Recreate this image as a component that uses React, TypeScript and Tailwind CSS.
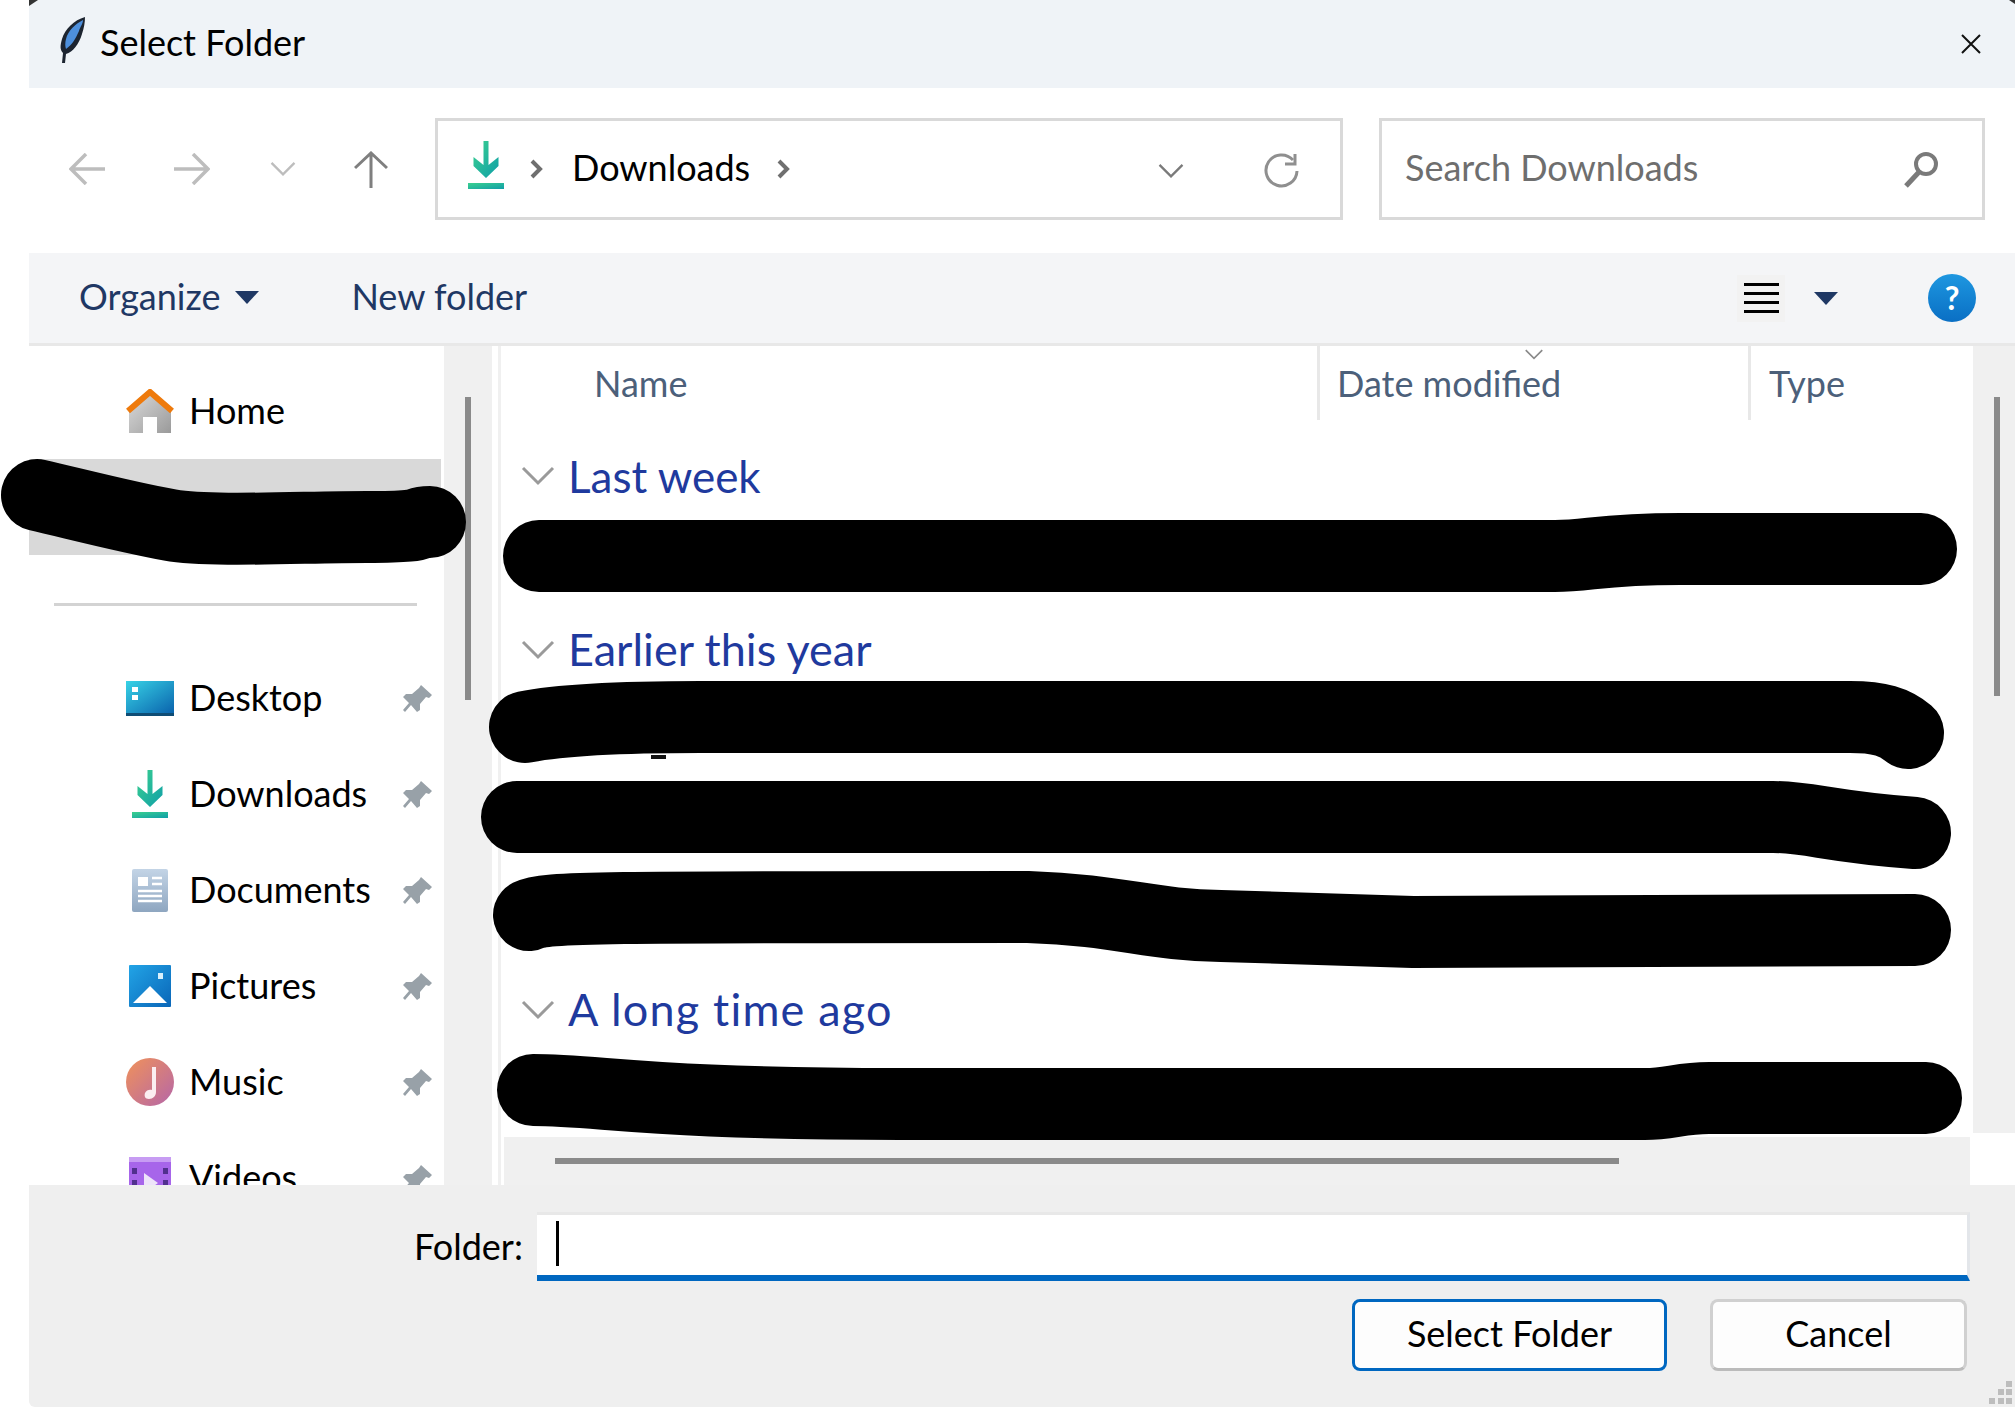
import React from "react";

const font = { fontFamily: "Lato, 'Noto Sans', sans-serif" };

function DownloadIcon({ className }: { className: string }) {
  return (
    <svg viewBox="0 0 36 48" className={className}>
      <defs>
        <linearGradient id="dl" x1="0" y1="0" x2="1" y2="1">
          <stop offset="0" stopColor="#3bd08f" />
          <stop offset="1" stopColor="#0f9fa8" />
        </linearGradient>
      </defs>
      <path d="M15.5 0h5v24l10-8v9L18 37 5.5 25v-9l10 8z" fill="url(#dl)" />
      <rect x="0" y="42" width="36" height="6" fill="url(#dl)" />
    </svg>
  );
}

function Pin() {
  return (
    <svg viewBox="0 0 32 32" className="h-[32px] w-[32px]">
      <path d="M20 1l11 10-3 3-3-1-6 7 0 6-3 2-6-7-6 7-2-2 6-7-6-6 3-3h6l7-6z" fill="#98a1a8" />
    </svg>
  );
}

function HomeIcon() {
  return (
    <svg viewBox="0 0 48 44" className="h-[44px] w-[48px]">
      <defs>
        <linearGradient id="hm" x1="0" y1="0" x2="1" y2="1">
          <stop offset="0" stopColor="#dcdcdc" />
          <stop offset="1" stopColor="#9a9a9a" />
        </linearGradient>
      </defs>
      <path d="M3 22L24 3l21 19v22H31V28H17v16H3z" fill="url(#hm)" />
      <path d="M2 22L24 3l22 19" fill="none" stroke="#ee7a0c" strokeWidth="6" />
    </svg>
  );
}

function DesktopIcon() {
  return (
    <svg viewBox="0 0 48 35" className="h-[35px] w-[48px]">
      <defs>
        <linearGradient id="dk" x1="0" y1="0" x2="1" y2="1">
          <stop offset="0" stopColor="#38d3e6" />
          <stop offset="1" stopColor="#0a63ad" />
        </linearGradient>
      </defs>
      <rect width="48" height="32" fill="url(#dk)" />
      <rect y="32" width="48" height="3" fill="#0f4d75" />
      <rect x="6" y="6" width="6" height="5" fill="#fff" />
      <rect x="6" y="14" width="6" height="5" fill="#fff" />
    </svg>
  );
}

function DocumentsIcon() {
  return (
    <svg viewBox="0 0 36 43" className="h-[43px] w-[36px]">
      <defs>
        <linearGradient id="doc" x1="0" y1="0" x2="0" y2="1">
          <stop offset="0" stopColor="#c3d4e6" />
          <stop offset="1" stopColor="#8ea6c0" />
        </linearGradient>
      </defs>
      <rect width="36" height="43" rx="2" fill="url(#doc)" />
      <rect x="6" y="8" width="10" height="9" fill="#fff" />
      <path d="M20 9h10M20 15h10M6 22h24M6 27h24M6 32h24" stroke="#fff" strokeWidth="2.5" />
    </svg>
  );
}

function PicturesIcon() {
  return (
    <svg viewBox="0 0 42 42" className="h-[42px] w-[42px]">
      <defs>
        <linearGradient id="pic" x1="0" y1="0" x2="1" y2="1">
          <stop offset="0" stopColor="#22a4e6" />
          <stop offset="1" stopColor="#0a66b8" />
        </linearGradient>
      </defs>
      <rect width="42" height="42" rx="1" fill="url(#pic)" />
      <path d="M4 38L21 21l17 17z" fill="#fff" />
      <rect x="29" y="8" width="5" height="6" fill="#d9f0fb" />
    </svg>
  );
}

function MusicIcon() {
  return (
    <svg viewBox="0 0 48 48" className="h-[48px] w-[48px]">
      <defs>
        <linearGradient id="mus" x1="0" y1="0" x2="1" y2="1">
          <stop offset="0" stopColor="#f0925a" />
          <stop offset="1" stopColor="#b566a8" />
        </linearGradient>
      </defs>
      <circle cx="24" cy="24" r="24" fill="url(#mus)" />
      <path d="M26 9h4v25c0 4-3 7-7 7s-5-3-4-6 5-4 7-3z" fill="#fbeef0" />
    </svg>
  );
}

function VideosIcon() {
  return (
    <svg viewBox="0 0 42 42" className="h-[42px] w-[42px]">
      <rect width="42" height="42" fill="#a765ea" />
      <rect width="42" height="5" fill="#c79cf3" />
      <path d="M3 11h5v6H3zM34 11h5v6h-5zM3 23h5v6H3zM34 23h5v6h-5z" fill="#51308e" />
      <path d="M15 16l14 10-14 10z" fill="#eee4fa" />
    </svg>
  );
}

function Caret() {
  return (
    <svg viewBox="0 0 24 13" className="h-[13px] w-[24px]">
      <path d="M0 0h24L12 13z" fill="#1f3864" />
    </svg>
  );
}

function Chevron({ color, className }: { color: string; className: string }) {
  return (
    <svg viewBox="0 0 34 20" className={className}>
      <path d="M2 2l15 15L32 2" fill="none" stroke={color} strokeWidth="3" />
    </svg>
  );
}

function Crumb() {
  return (
    <svg viewBox="0 0 13 20" className="h-[20px] w-[13px]">
      <path d="M2 2l8 8-8 8" fill="none" stroke="#6f6f6f" strokeWidth="4" />
    </svg>
  );
}

function NavRow({ icon, label, pin = true }: { icon: React.ReactNode; label: string; pin?: boolean }) {
  return (
    <div className="flex h-[96px] shrink-0 items-center">
      <div className="ml-[97px] flex w-[48px] justify-center">{icon}</div>
      <span className="ml-[15px] flex-1 pb-[2px] text-[36px] text-black">{label}</span>
      {pin && <div className="mr-[11px] mt-[3px]"><Pin /></div>}
    </div>
  );
}

function GroupHeader({ label, className }: { label: string; className: string }) {
  return (
    <div className="flex h-[78px] shrink-0 items-center pl-[20px]">
      <Chevron color="#9a9a9a" className="h-[20px] w-[34px]" />
      <span className={"ml-[13px] text-[#1f3a9e] " + className}>{label}</span>
    </div>
  );
}

export default function App() {
  return (
    <div className="relative h-[1407px] w-[2015px] overflow-hidden bg-white pl-[29px]" style={font}>
      <div className="flex h-full flex-col">
        {/* title bar */}
        <div className="flex h-[88px] shrink-0 items-center bg-[#eff3f7] pl-[31px] pr-[34px]">
          <svg viewBox="0 0 26 46" className="mb-[8px] h-[46px] w-[26px]">
            <path d="M25 0C14 3 5 12 2 22c-2 7-2 11 1 14l-1 10h3l1-9c7-2 13-10 16-20 2-6 3-12 3-17z" fill="#1c2430" />
            <path d="M23 3C15 7 8 14 6 22c-1 4-1 7 0 10 6-4 10-11 13-18 1-4 4-7 4-11z" fill="#4d8fdc" />
          </svg>
          <span className="ml-[14px] flex-1 pb-[5px] text-[36px] text-black">Select Folder</span>
          <svg viewBox="0 0 20 20" className="h-[20px] w-[20px]">
            <path d="M1 1l18 18M19 1L1 19" stroke="#111" strokeWidth="2" />
          </svg>
        </div>

        {/* navigation row */}
        <div className="flex h-[165px] shrink-0 items-center pb-[3px]">
          <svg viewBox="0 0 36 32" className="ml-[40px] h-[32px] w-[36px]">
            <path d="M36 16H3M17 1L2 16l15 15" fill="none" stroke="#bdbdbd" strokeWidth="3.5" />
          </svg>
          <svg viewBox="0 0 36 32" className="ml-[69px] h-[32px] w-[36px]">
            <path d="M0 16h33M19 1l15 15-15 15" fill="none" stroke="#bdbdbd" strokeWidth="3.5" />
          </svg>
          <Chevron color="#bdbdbd" className="ml-[60px] h-[16px] w-[26px]" />
          <svg viewBox="0 0 34 37" className="ml-[58px] h-[37px] w-[34px]">
            <path d="M17 37V2M1 17L17 2l16 15" fill="none" stroke="#7f7f7f" strokeWidth="3" />
          </svg>
          <div className="ml-[47px] flex h-[102px] w-[908px] shrink-0 items-center border-[3px] border-[#d9d9d9] pl-[30px]">
            <DownloadIcon className="mb-[8px] h-[48px] w-[36px]" />
            <div className="ml-[26px]"><Crumb /></div>
            <span className="ml-[29px] pb-[5px] text-[36px] text-black">Downloads</span>
            <div className="ml-[27px]"><Crumb /></div>
            <div className="flex-1" />
            <Chevron color="#7a7a7a" className="mt-[4px] h-[16px] w-[26px]" />
            <svg viewBox="0 0 36 36" className="ml-[80px] mr-[40px] mt-[4px] h-[36px] w-[36px]">
              <path d="M29 7A15.5 15.5 0 1 0 33 18" fill="none" stroke="#8f8f8f" strokeWidth="3" />
              <path d="M31 1v10H21" fill="none" stroke="#8f8f8f" strokeWidth="3" />
            </svg>
          </div>
          <div className="ml-[36px] flex h-[102px] w-[606px] shrink-0 items-center justify-between border-[3px] border-[#d9d9d9] pl-[23px] pr-[43px]">
            <span className="pb-[5px] text-[36px] text-[#6e6e6e]">Search Downloads</span>
            <svg viewBox="0 0 36 37" className="h-[37px] w-[36px]">
              <circle cx="23" cy="13" r="10" fill="none" stroke="#7a7a7a" strokeWidth="4" />
              <path d="M16 21L3 35" stroke="#7a7a7a" strokeWidth="5" />
            </svg>
          </div>
        </div>

        {/* toolbar */}
        <div className="flex h-[93px] shrink-0 items-center border-b-[3px] border-[#e8e8e8] bg-[#f4f5f7] pl-[50px]">
          <span className="pb-[5px] text-[36px] text-[#1f3864]">Organize</span>
          <div className="mb-[2px] ml-[15px]"><Caret /></div>
          <span className="ml-[92px] flex-1 pb-[5px] text-[36px] text-[#1f3864]">New folder</span>
          <div className="flex h-[47px] w-[48px] items-center justify-center bg-[#f2f2f2]">
            <div className="flex w-[35px] flex-col gap-[6px]">
              <div className="h-[3px] bg-black" />
              <div className="h-[3px] bg-black" />
              <div className="h-[3px] bg-black" />
              <div className="h-[3px] bg-black" />
            </div>
          </div>
          <div className="ml-[29px]"><Caret /></div>
          <div className="ml-[90px] mr-[39px] flex h-[48px] w-[48px] items-center justify-center rounded-full bg-gradient-to-b from-[#1e97e0] to-[#0a6fc4] text-[32px] font-bold text-white">?</div>
        </div>

        {/* body */}
        <div className="flex min-h-0 flex-1">
          <div className="flex w-[415px] shrink-0 flex-col overflow-hidden pt-[17px]">
            <NavRow icon={<HomeIcon />} label="Home" pin={false} />
            <div className="h-[96px] w-[412px] shrink-0 bg-[#d9d9d9]" />
            <div className="mb-[44px] ml-[25px] mt-[48px] h-[3px] w-[363px] shrink-0 bg-[#d3d3d3]" />
            <NavRow icon={<DesktopIcon />} label="Desktop" />
            <NavRow icon={<DownloadIcon className="h-[48px] w-[36px]" />} label="Downloads" />
            <NavRow icon={<DocumentsIcon />} label="Documents" />
            <NavRow icon={<PicturesIcon />} label="Pictures" />
            <NavRow icon={<MusicIcon />} label="Music" />
            <NavRow icon={<VideosIcon />} label="Videos" />
          </div>
          <div className="flex w-[48px] shrink-0 justify-center bg-[#f0f0f0] pt-[51px]">
            <div className="h-[303px] w-[6px] bg-[#8a8a8a]" />
          </div>
          <div className="w-[9px] shrink-0 border-r-[3px] border-[#f0f0f0]" />

          <div className="flex min-w-0 flex-1 flex-col">
            <div className="flex min-h-0 flex-1">
              <div className="min-w-0 flex-1 overflow-hidden">
                <div className="relative flex h-[74px] items-center text-[36px] text-[#4c607a]">
                  <span className="ml-[93px] w-[723px]">Name</span>
                  <div className="h-full w-[3px] bg-[#e8e8e8]" />
                  <span className="ml-[17px] w-[411px]">Date modified</span>
                  <div className="h-full w-[3px] bg-[#e8e8e8]" />
                  <span className="ml-[18px]">Type</span>
                  <Chevron color="#8a8a8a" className="absolute left-[1023px] top-[3px] h-[11px] w-[20px]" />
                </div>
                <div className="h-[17px]" />
                <GroupHeader label="Last week" className="text-[44px]" />
                <div className="h-[96px]" />
                <GroupHeader label="Earlier this year" className="text-[45px]" />
                <div className="h-[94px]" />
                <div className="h-[94px]" />
                <div className="h-[94px]" />
                <GroupHeader label="A long time ago" className="text-[45px] tracking-[1.2px]" />
              </div>
              <div className="flex w-[42px] shrink-0 justify-center bg-[#f0f0f0] pl-[6px] pt-[51px]">
                <div className="h-[299px] w-[6px] bg-[#8a8a8a]" />
              </div>
            </div>
            <div className="h-[52px] shrink-0 pl-[3px] pr-[45px] pt-[4px]">
              <div className="flex h-[48px] bg-[#f0f0f0] pl-[51px] pt-[21px]">
                <div className="h-[6px] w-[1064px] bg-[#8a8a8a]" />
              </div>
            </div>
          </div>
        </div>

        {/* footer */}
        <div className="flex h-[222px] shrink-0 flex-col rounded-bl-[6px] bg-[#efefef]">
          <div className="mt-[27px] flex items-start">
            <span className="ml-[385px] mt-[14px] w-[123px] text-[36px] leading-[40px] text-black">Folder:</span>
            <div className="h-[69px] w-[1433px] border-b-[6px] border-r-[3px] border-t-[3px] border-b-[#0067c0] border-r-[#e3e6ea] border-t-[#e8e8e8] bg-white pl-[19px] pt-[6px]">
              <div className="h-[45px] w-[3px] bg-black" />
            </div>
          </div>
          <div className="mt-[18px] flex">
            <div className="ml-[1323px] flex h-[72px] w-[315px] items-center justify-center rounded-[8px] border-[3px] border-[#0067c0] bg-[#fdfdfd] pb-[4px] text-[36px] text-black">Select Folder</div>
            <div className="ml-[43px] flex h-[72px] w-[257px] items-center justify-center rounded-[8px] border-[3px] border-[#d0d0d0] border-b-[#bbbbbb] bg-[#fdfdfd] pb-[4px] text-[36px] text-black">Cancel</div>
          </div>
        </div>
      </div>

      {/* marker strokes over the screenshot, and the window's corner bits */}
      <svg viewBox="0 0 2015 1407" className="absolute left-0 top-0 h-[1407px] w-[2015px]">
        <rect x="651" y="755" width="15" height="4" fill="#111" />
        <g fill="none" stroke="#000" strokeWidth="72" strokeLinecap="round" strokeLinejoin="round">
          <path d="M37 495C80 505 130 518 170 525S300 527 367 527 410 522 430 522" />
          <path d="M539 556H1555C1590 556 1600 549 1680 549H1921" />
          <path d="M525 727C560 720 620 717 700 717H1850C1880 717 1895 722 1908 733" />
          <path d="M517 817H1773C1810 817 1830 827 1915 833" />
          <path d="M529 915C545 907 600 907 1028 907 1120 910 1150 925 1221 926L1413 932 1915 930" />
          <path d="M533 1090C600 1090 650 1104 900 1104H1645C1670 1104 1680 1098 1709 1098H1926" />
        </g>
        <path d="M29 0h9l-9 6z" fill="#333" />
        <path d="M2015 0h-6l6 4z" fill="#333" />
        <g fill="#bdbdbd">
          <rect x="2006" y="1381" width="6" height="6" />
          <rect x="1998" y="1389" width="6" height="6" />
          <rect x="2006" y="1389" width="6" height="6" />
          <rect x="1989" y="1398" width="6" height="6" />
          <rect x="1998" y="1398" width="6" height="6" />
          <rect x="2006" y="1398" width="6" height="6" />
        </g>
      </svg>
    </div>
  );
}
